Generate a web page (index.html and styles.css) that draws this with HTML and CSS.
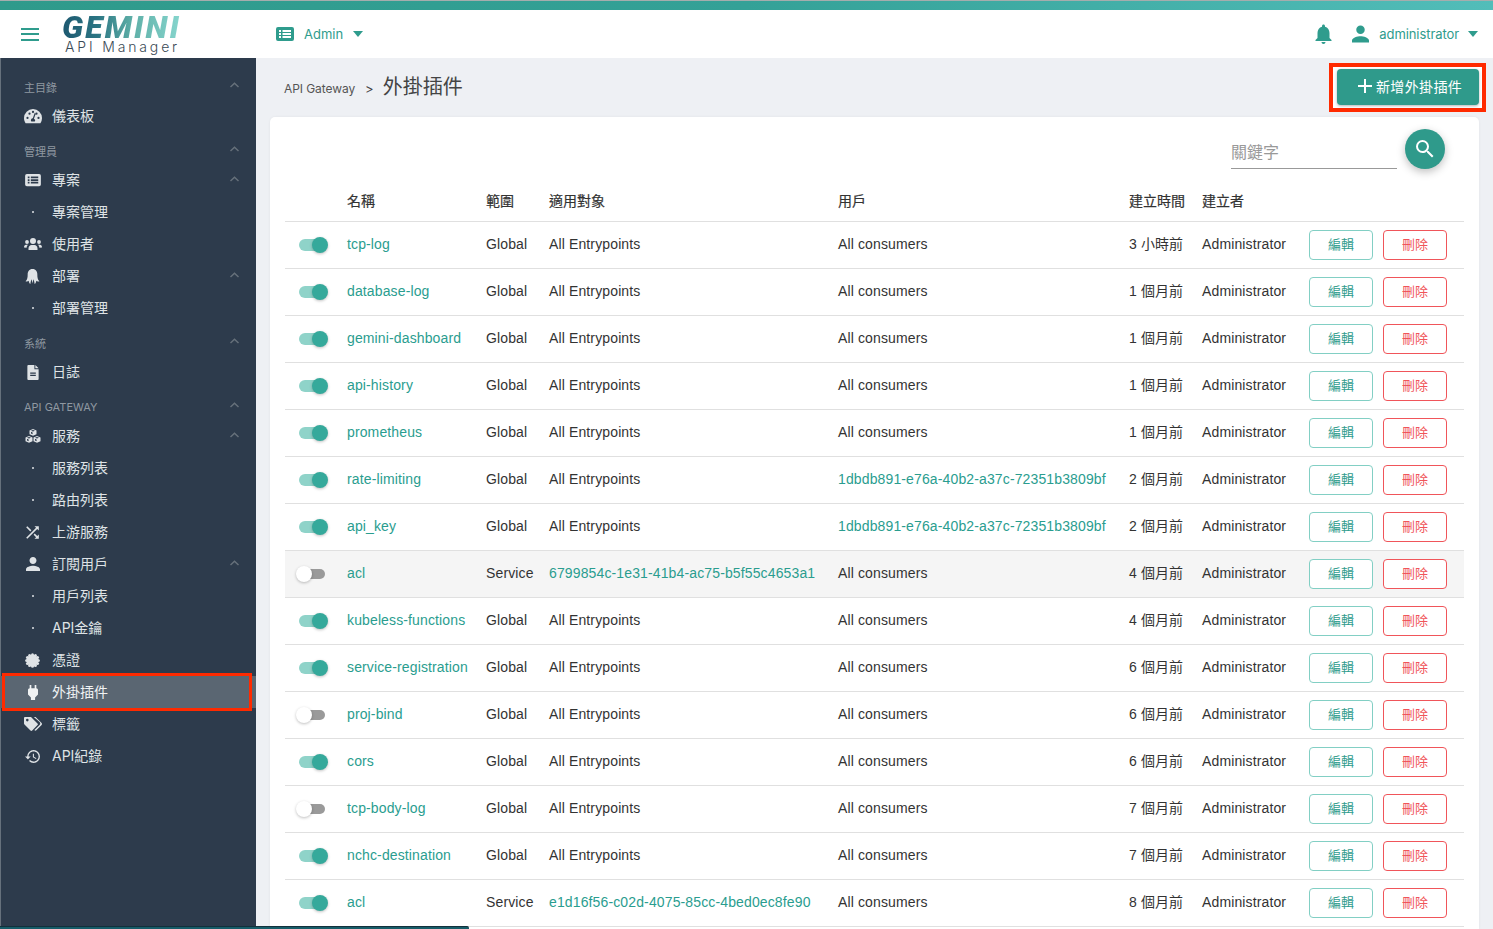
FILE: index.html
```html
<!DOCTYPE html>
<html lang="zh-Hant">
<head>
<meta charset="utf-8">
<title>外掛插件</title>
<link rel="stylesheet" href="styles.css">
</head>
<body>
<svg class="defs" width="0" height="0" aria-hidden="true">
  <symbol id="i-caret" viewBox="0 0 10 6"><path d="M0 0h10L5 6z"/></symbol>
  <symbol id="i-chev" viewBox="0 0 10 6"><path d="M5 0l5 4.600-1.100 1.200L5 2.300 1.100 5.800 0 4.600z"/></symbol>
  <symbol id="i-gauge" viewBox="0 0 18 16"><path fill-rule="evenodd" d="M9 1a9 9 0 0 0-9 9c0 1.900.6 3.700 1.600 5.200h14.800A9 9 0 0 0 18 10a9 9 0 0 0-9-9zM3.500 11a1.100 1.100 0 1 1 0-2.200 1.100 1.100 0 0 1 0 2.200zm2-4.200a1.100 1.100 0 1 1 0-2.200 1.100 1.100 0 0 1 0 2.200zM9 5a1.100 1.100 0 1 1 0-2.200A1.100 1.100 0 0 1 9 5zm1.800 8.500H7.300a2 2 0 0 1 1.500-3.200l2-5.500 1.100.4-2 5.500a2 2 0 0 1 .9 2.800zM14.500 11a1.100 1.100 0 1 1 0-2.200 1.100 1.100 0 0 1 0 2.200zm-2-4.200a1.100 1.100 0 1 1 0-2.200 1.100 1.100 0 0 1 0 2.200z"/></symbol>
  <symbol id="i-list" viewBox="0 0 18 16"><path fill-rule="evenodd" d="M2 1h14a2 2 0 0 1 2 2v10a2 2 0 0 1-2 2H2a2 2 0 0 1-2-2V3a2 2 0 0 1 2-2zm1 3v2h2V4zm3.500 0v2H15V4zM3 7v2h2V7zm3.500 0v2H15V7zM3 10v2h2v-2zm3.500 0v2H15v-2z"/></symbol>
  <symbol id="i-users" viewBox="0 0 18 14"><circle cx="9" cy="4" r="3"/><circle cx="3" cy="5" r="1.900"/><circle cx="15" cy="5" r="1.900"/><path d="M4.500 13v-1.500C4.500 9.300 6 8 7.500 8h3c1.500 0 3 1.300 3 3.500V13zM0 10.500C0 8.800.8 7.800 2 7.800h2c-.6.600-1.300 1.700-1.400 3zM18 10.500c0-1.700-.8-2.700-2-2.700h-2c.6.600 1.300 1.700 1.400 3z"/></symbol>
  <symbol id="i-ghost" viewBox="0 0 13 14"><path d="M6.500 0C9.700 0 11 2.500 11 5c0 3 .2 5 2 6.500-1.500.5-2.500 0-3-.5 0 1-.5 2.500-1.500 3-.2-1.500-.6-3.500-1.200-4.500L6.500 13.500 5.700 9.500c-.6 1-1 3-1.200 4.500-1-.5-1.500-2-1.500-3-.5.5-1.500 1-3 .5C1.800 10 2 8 2 5 2 2.500 3.300 0 6.500 0z"/></symbol>
  <symbol id="i-file" viewBox="0 0 12 16"><path fill-rule="evenodd" d="M1 0h6.500v4.500H12V15a1 1 0 0 1-1 1H1a1 1 0 0 1-1-1V1a1 1 0 0 1 1-1zm2 8v1.200h6V8zm0 2.500v1.200h6v-1.200zM8.500 0L12 3.500H8.500z"/></symbol>
  <symbol id="i-cubes" viewBox="0 0 16 14"><path d="M8 0l3.500 1.400v3.800L8 6.700 4.500 5.200V1.400zM4 7l3.500 1.400v3.800L4 13.800.5 12.200V8.400zM12 7l3.500 1.400v3.800L12 13.800l-3.500-1.600V8.400z"/><path fill="#2d3b4c" d="M6 1.800l2 .8 2-.8-2-.8zM6 2.800l1.600.7v1.700L6 4.500zM2 8.800l2 .8 2-.8-2-.8zM2 9.800l1.600.7v1.700L2 11.500zM10 8.800l2 .8 2-.8-2-.8zM10 9.800l1.600.7v1.700l-1.600-.7z"/></symbol>
  <symbol id="i-shuffle" viewBox="2.500 2.500 19 19"><path d="M10.590 9.170L5.410 4 4 5.410l5.170 5.170 1.420-1.410zM14.500 4l2.040 2.040L4 18.590 5.410 20 17.960 7.460 20 9.500V4h-5.500zm.33 9.410l-1.410 1.410 3.130 3.130L14.500 20H20v-5.500l-2.040 2.040-3.130-3.130z"/></symbol>
  <symbol id="i-person" viewBox="4 4 16 16"><path d="M12 12c2.210 0 4-1.790 4-4s-1.790-4-4-4-4 1.790-4 4 1.790 4 4 4zm0 2c-2.670 0-8 1.340-8 4v2h16v-2c0-2.660-5.330-4-8-4z"/></symbol>
  <symbol id="i-cert" viewBox="0 0 16 16"><circle cx="8" cy="8" r="6.200"/><circle cx="14.200" cy="8" r="1.600"/><circle cx="13.370" cy="11.100" r="1.600"/><circle cx="11.100" cy="13.370" r="1.600"/><circle cx="8" cy="14.200" r="1.600"/><circle cx="4.900" cy="13.370" r="1.600"/><circle cx="2.630" cy="11.100" r="1.600"/><circle cx="1.800" cy="8" r="1.600"/><circle cx="2.630" cy="4.900" r="1.600"/><circle cx="4.900" cy="2.630" r="1.600"/><circle cx="8" cy="1.800" r="1.600"/><circle cx="11.100" cy="2.630" r="1.600"/><circle cx="13.370" cy="4.900" r="1.600"/></symbol>
  <symbol id="i-plug" viewBox="5 3 14 18"><path d="M16.010 7L16 3h-2v4h-4V3H8v4h-.01C7 6.990 6 7.990 6 8.990v5.490L9.500 18v3h5v-3l3.500-3.510v-5.500c0-1-1-2-1.990-1.990z"/></symbol>
  <symbol id="i-tags" viewBox="0 0 18 14"><path fill-rule="evenodd" d="M0 1.200C0 .5.500 0 1.200 0h5.300c.4 0 .7.100 1 .4l6 6c.5.500.5 1.200 0 1.700l-5.300 5.400c-.5.500-1.200.5-1.700 0l-6-6C.2 7.200 0 6.900 0 6.500zm3.300 3.200a1.300 1.300 0 1 0 0-2.600 1.300 1.300 0 0 0 0 2.600z"/><path d="M9.800 0h1.300c.4 0 .7.100 1 .4l5.500 5.700c.5.500.5 1.300 0 1.800l-5.300 5.400c-.5.500-1.200.5-1.700 0l-.2-.2 5.200-5.200c.9-.9.900-1.900 0-2.800z"/></symbol>
  <symbol id="i-history" viewBox="1 3 21 18"><path d="M13 3a9 9 0 0 0-9 9H1l3.890 3.890.07.14L9 12H6c0-3.870 3.130-7 7-7s7 3.130 7 7-3.130 7-7 7c-1.930 0-3.680-.79-4.940-2.060l-1.420 1.420A8.954 8.954 0 0 0 13 21a9 9 0 0 0 0-18zm-1 5v5l4.280 2.540.72-1.210-3.500-2.080V8H12z"/></symbol>
</svg>

<div class="topband"></div>
<header class="topbar">
  <div class="hamburger"><span></span><span></span><span></span></div>
  <div class="logo">
    <div class="logo-main">GEMINI</div>
    <div class="logo-sub">API Manager</div>
  </div>
  <div class="project">
    <svg class="project-icon"><use href="#i-list"/></svg>
    <span>Admin</span>
    <svg class="caret"><use href="#i-caret"/></svg>
  </div>
  <div class="top-right">
    <svg class="bell" viewBox="4 2 16 20"><path d="M12 22c1.100 0 2-.9 2-2h-4c0 1.100.9 2 2 2zm6-6v-5c0-3.070-1.630-5.640-4.500-6.320V4c0-.83-.67-1.500-1.500-1.500s-1.500.67-1.500 1.500v.68C7.640 5.360 6 7.920 6 11v5l-2 2v1h16v-1l-2-2z"/></svg>
    <svg class="user"><use href="#i-person"/></svg>
    <span class="username">administrator</span>
    <svg class="caret"><use href="#i-caret"/></svg>
  </div>
</header>

<div class="main">
  <nav class="sidebar">
    <div class="nav-label"><span>主目錄</span><svg class="chev"><use href="#i-chev"/></svg></div>
    <div class="nav-item"><svg class="nav-icon ic-18"><use href="#i-gauge"/></svg><span>儀表板</span></div>

    <div class="nav-label spaced"><span>管理員</span><svg class="chev"><use href="#i-chev"/></svg></div>
    <div class="nav-item"><svg class="nav-icon ic-16"><use href="#i-list"/></svg><span>專案</span><svg class="chev"><use href="#i-chev"/></svg></div>
    <div class="nav-item"><i class="dot"></i><span>專案管理</span></div>
    <div class="nav-item"><svg class="nav-icon ic-18"><use href="#i-users"/></svg><span>使用者</span></div>
    <div class="nav-item"><svg class="nav-icon ic-15"><use href="#i-ghost"/></svg><span>部署</span><svg class="chev"><use href="#i-chev"/></svg></div>
    <div class="nav-item"><i class="dot"></i><span>部署管理</span></div>

    <div class="nav-label spaced"><span>系統</span><svg class="chev"><use href="#i-chev"/></svg></div>
    <div class="nav-item"><svg class="nav-icon ic-12"><use href="#i-file"/></svg><span>日誌</span></div>

    <div class="nav-label spaced"><span>API GATEWAY</span><svg class="chev"><use href="#i-chev"/></svg></div>
    <div class="nav-item"><svg class="nav-icon ic-16"><use href="#i-cubes"/></svg><span>服務</span><svg class="chev"><use href="#i-chev"/></svg></div>
    <div class="nav-item"><i class="dot"></i><span>服務列表</span></div>
    <div class="nav-item"><i class="dot"></i><span>路由列表</span></div>
    <div class="nav-item"><svg class="nav-icon ic-15"><use href="#i-shuffle"/></svg><span>上游服務</span></div>
    <div class="nav-item"><svg class="nav-icon ic-14"><use href="#i-person"/></svg><span>訂閱用戶</span><svg class="chev"><use href="#i-chev"/></svg></div>
    <div class="nav-item"><i class="dot"></i><span>用戶列表</span></div>
    <div class="nav-item"><i class="dot"></i><span>API金鑰</span></div>
    <div class="nav-item"><svg class="nav-icon ic-15"><use href="#i-cert"/></svg><span>憑證</span></div>
    <div class="nav-item active"><svg class="nav-icon ic-12"><use href="#i-plug"/></svg><span>外掛插件</span><b class="mark"></b></div>
    <div class="nav-item"><svg class="nav-icon ic-18"><use href="#i-tags"/></svg><span>標籤</span></div>
    <div class="nav-item"><svg class="nav-icon ic-15"><use href="#i-history"/></svg><span>API紀錄</span></div>
  </nav>

  <section class="content">
    <div class="page-head">
      <div class="crumbs"><span class="crumb">API Gateway</span><span class="sep">&gt;</span><h1>外掛插件</h1></div>
      <div class="add-frame"><button class="add-btn"><svg viewBox="5 5 14 14"><path d="M19 13h-6v6h-2v-6H5v-2h6V5h2v6h6v2z"/></svg><span>新增外掛插件</span></button></div>
    </div>
    <div class="card">
      <div class="search-row">
        <input class="search-input" placeholder="關鍵字">
        <button class="search-btn"><svg viewBox="3 3 18 18"><path d="M15.500 14h-.79l-.28-.27A6.471 6.471 0 0 0 16 9.500 6.500 6.500 0 1 0 9.500 16c1.610 0 3.090-.59 4.230-1.570l.27.28v.79l5 4.990L20.490 19l-4.990-5zm-6 0C7.010 14 5 11.990 5 9.500S7.010 5 9.500 5 14 7.010 14 9.500 11.990 14 9.500 14z"/></svg></button>
      </div>
      <table class="plugins">
        <colgroup><col class="c1"><col class="c2"><col class="c3"><col class="c4"><col class="c5"><col class="c6"><col class="c7"><col class="c8"></colgroup>
        <thead><tr><th></th><th>名稱</th><th>範圍</th><th>適用對象</th><th>用戶</th><th>建立時間</th><th>建立者</th><th></th></tr></thead>
        <tbody>
          <tr><td><div class="toggle on"><i></i></div></td><td><a>tcp-log</a></td><td>Global</td><td>All Entrypoints</td><td>All consumers</td><td>3 小時前</td><td>Administrator</td><td><div class="actions"><button class="btn edit">編輯</button><button class="btn del">刪除</button></div></td></tr>
          <tr><td><div class="toggle on"><i></i></div></td><td><a>database-log</a></td><td>Global</td><td>All Entrypoints</td><td>All consumers</td><td>1 個月前</td><td>Administrator</td><td><div class="actions"><button class="btn edit">編輯</button><button class="btn del">刪除</button></div></td></tr>
          <tr><td><div class="toggle on"><i></i></div></td><td><a>gemini-dashboard</a></td><td>Global</td><td>All Entrypoints</td><td>All consumers</td><td>1 個月前</td><td>Administrator</td><td><div class="actions"><button class="btn edit">編輯</button><button class="btn del">刪除</button></div></td></tr>
          <tr><td><div class="toggle on"><i></i></div></td><td><a>api-history</a></td><td>Global</td><td>All Entrypoints</td><td>All consumers</td><td>1 個月前</td><td>Administrator</td><td><div class="actions"><button class="btn edit">編輯</button><button class="btn del">刪除</button></div></td></tr>
          <tr><td><div class="toggle on"><i></i></div></td><td><a>prometheus</a></td><td>Global</td><td>All Entrypoints</td><td>All consumers</td><td>1 個月前</td><td>Administrator</td><td><div class="actions"><button class="btn edit">編輯</button><button class="btn del">刪除</button></div></td></tr>
          <tr><td><div class="toggle on"><i></i></div></td><td><a>rate-limiting</a></td><td>Global</td><td>All Entrypoints</td><td><a>1dbdb891-e76a-40b2-a37c-72351b3809bf</a></td><td>2 個月前</td><td>Administrator</td><td><div class="actions"><button class="btn edit">編輯</button><button class="btn del">刪除</button></div></td></tr>
          <tr><td><div class="toggle on"><i></i></div></td><td><a>api_key</a></td><td>Global</td><td>All Entrypoints</td><td><a>1dbdb891-e76a-40b2-a37c-72351b3809bf</a></td><td>2 個月前</td><td>Administrator</td><td><div class="actions"><button class="btn edit">編輯</button><button class="btn del">刪除</button></div></td></tr>
          <tr class="hover"><td><div class="toggle off"><i></i></div></td><td><a>acl</a></td><td>Service</td><td><a>6799854c-1e31-41b4-ac75-b5f55c4653a1</a></td><td>All consumers</td><td>4 個月前</td><td>Administrator</td><td><div class="actions"><button class="btn edit">編輯</button><button class="btn del">刪除</button></div></td></tr>
          <tr><td><div class="toggle on"><i></i></div></td><td><a>kubeless-functions</a></td><td>Global</td><td>All Entrypoints</td><td>All consumers</td><td>4 個月前</td><td>Administrator</td><td><div class="actions"><button class="btn edit">編輯</button><button class="btn del">刪除</button></div></td></tr>
          <tr><td><div class="toggle on"><i></i></div></td><td><a>service-registration</a></td><td>Global</td><td>All Entrypoints</td><td>All consumers</td><td>6 個月前</td><td>Administrator</td><td><div class="actions"><button class="btn edit">編輯</button><button class="btn del">刪除</button></div></td></tr>
          <tr><td><div class="toggle off"><i></i></div></td><td><a>proj-bind</a></td><td>Global</td><td>All Entrypoints</td><td>All consumers</td><td>6 個月前</td><td>Administrator</td><td><div class="actions"><button class="btn edit">編輯</button><button class="btn del">刪除</button></div></td></tr>
          <tr><td><div class="toggle on"><i></i></div></td><td><a>cors</a></td><td>Global</td><td>All Entrypoints</td><td>All consumers</td><td>6 個月前</td><td>Administrator</td><td><div class="actions"><button class="btn edit">編輯</button><button class="btn del">刪除</button></div></td></tr>
          <tr><td><div class="toggle off"><i></i></div></td><td><a>tcp-body-log</a></td><td>Global</td><td>All Entrypoints</td><td>All consumers</td><td>7 個月前</td><td>Administrator</td><td><div class="actions"><button class="btn edit">編輯</button><button class="btn del">刪除</button></div></td></tr>
          <tr><td><div class="toggle on"><i></i></div></td><td><a>nchc-destination</a></td><td>Global</td><td>All Entrypoints</td><td>All consumers</td><td>7 個月前</td><td>Administrator</td><td><div class="actions"><button class="btn edit">編輯</button><button class="btn del">刪除</button></div></td></tr>
          <tr><td><div class="toggle on"><i></i></div></td><td><a>acl</a></td><td>Service</td><td><a>e1d16f56-c02d-4075-85cc-4bed0ec8fe90</a></td><td>All consumers</td><td>8 個月前</td><td>Administrator</td><td><div class="actions"><button class="btn edit">編輯</button><button class="btn del">刪除</button></div></td></tr>
        </tbody>
      </table>
    </div>
  </section>
</div>
<div class="progress"></div>
</body>
</html>
```

FILE: styles.css
```css
* { box-sizing: border-box; }
html, body { margin: 0; height: 100%; overflow: hidden; }
body {
  display: flex;
  flex-direction: column;
  font-family: "Liberation Sans", "Noto Sans CJK TC", sans-serif;
  font-size: 14px;
  color: #333;
  background: #eef0f4;
}
.defs { position: absolute; }
svg { display: block; fill: currentColor; }

.topband {
  height: 10px;
  flex: none;
  border-top: 1px solid #a5adad;
  background: linear-gradient(90deg, #2f9a8b, #34a197 50%, #52bdb9);
}
.topbar {
  height: 48px;
  flex: none;
  display: flex;
  align-items: center;
  background: #fff;
  color: #2f9c8d;
  font-family: Inter, "Noto Sans CJK TC", sans-serif;
}
.hamburger { width: 18px; margin-left: 21px; display: flex; flex-direction: column; gap: 3.5px; }
.hamburger span { height: 2px; background: #2f9c8d; }
.logo { margin-left: 23px; width: 151px; height: 48px; padding-top: 4px; }
.logo-main {
  font: italic 900 32px/27px Roboto, sans-serif;
  letter-spacing: 2.1px;
  background: linear-gradient(90deg, #1d5870 0, #2b7583 30%, #5fb0a8 60%, #86d5cd 100%);
  -webkit-background-clip: text;
  background-clip: text;
  color: transparent;
  width: 118px;
}
.logo-sub {
  font: 300 14px/13px Inter, sans-serif;
  letter-spacing: 2.85px;
  color: #3a4a55;
  margin: -1px 0 0 3px;
  white-space: nowrap;
}
.project { margin-left: 63px; display: flex; align-items: center; font-size: 13px; }
.project-icon { width: 18px; height: 16px; margin-top: -1px; }
.project span { margin-left: 10px; }
.caret { width: 10px; height: 6px; }
.project .caret { margin-left: 10px; }
.top-right { margin-left: auto; display: flex; align-items: center; padding-right: 15px; font-size: 13px; }
.bell { width: 17px; height: 20px; }
.user { width: 17px; height: 18px; margin-left: 20px; }
.username { margin-left: 10px; letter-spacing: -.08px; }
.top-right .caret { margin-left: 9px; }

.main { flex: 1; min-height: 0; display: flex; }
.sidebar {
  width: 256px;
  flex: none;
  padding-top: 16px;
  background: #2d3b4c;
  border-left: 1px solid #66717c;
  color: #dfe3e6;
  font-family: Inter, "Noto Sans CJK TC", sans-serif;
}
.nav-label {
  height: 26px;
  display: flex;
  align-items: center;
  padding: 0 17px 0 23px;
  font-size: 11px;
  color: #8f98a1;
}
.nav-label.spaced { margin-top: 6px; }
.chev { width: 9px; height: 6px; margin-left: auto; color: #66707a; margin-top: -5px; }
.nav-item {
  position: relative;
  height: 32px;
  display: flex;
  align-items: center;
  padding-right: 17px;
  font-size: 14px;
}
.nav-item .chev { margin-top: -2px; }
.nav-icon { width: 18px; height: 16px; margin: 0 0 0 23px; }
.nav-item > span { position: absolute; left: 51px; top: 5px; }
.ic-18 { width: 18px; height: 16px; }
.ic-16 { width: 18px; height: 14px; }
.ic-15 { width: 15px; height: 15px; margin-left: 24px; }
.ic-14 { width: 14px; height: 14px; margin-left: 25px; }
.ic-12 { width: 12px; height: 15px; margin-left: 26px; }
.dot { width: 2px; height: 2px; margin-left: 31px; background: #dfe3e6; border-radius: 50%; }
.nav-item.active { background: #5a6672; color: #f0f2f3; margin-left: -1px; padding-left: 1px; }
.nav-item.active > span { left: 52px; }
.mark {
  position: absolute;
  left: 2px;
  top: -3px;
  width: 250px;
  height: 38px;
  border: 3.5px solid #ff2a00;
}

.content { flex: 1; min-width: 0; display: flex; flex-direction: column; padding: 0 14px; }
.page-head { height: 59px; flex: none; display: flex; justify-content: space-between; align-items: flex-start; }
.crumbs { display: flex; align-items: center; height: 57px; padding-left: 14px; }
.crumb { font: 12px Inter, sans-serif; color: #555; letter-spacing: -.08px; margin-top: 4px; }
.sep { margin-left: 10px; font: 13px Inter, sans-serif; color: #444; margin-top: 4px; }
.crumbs h1 { margin: -2px 0 0 9px; font: 400 20px "Noto Sans CJK TC", sans-serif; color: #444; }
.add-frame {
  margin: 5px -7px 0 0;
  padding: 2px 3px 3px 4px;
  border: 4px solid #ff2a00;
  background: #fff;
  height: 49px;
}
.add-btn {
  width: 142px;
  height: 36px;
  display: flex;
  align-items: center;
  padding: 0 0 2px 21px;
  border: 0;
  border-radius: 4px;
  background: #2f9a8b;
  color: #fff;
  box-shadow: 0 1px 3px rgba(0,0,0,.3);
  font: 14px "Noto Sans CJK TC", sans-serif;
  letter-spacing: .35px;
}
.add-btn svg { width: 14px; height: 14px; margin-right: 4px; }

.card {
  flex: 1;
  background: #fff;
  border-radius: 5px 5px 0 0;
  padding: 12px 15px 0;
  box-shadow: 0 0 3px rgba(0,0,0,.06);
}
.search-row { height: 55px; display: flex; justify-content: flex-end; align-items: flex-start; gap: 8px; padding-right: 19px; }
.search-input {
  width: 166px;
  height: 40px;
  padding: 6px 0 1px 0;
  border: 0;
  border-bottom: 1px solid #999;
  outline: 0;
  font: 16px "Noto Sans CJK TC", sans-serif;
  background: transparent;
}
.search-input::placeholder { color: #999; opacity: 1; }
.search-btn {
  width: 40px;
  height: 40px;
  padding: 10px 11px;
  border: 0;
  border-radius: 50%;
  background: #2f9a8b;
  color: #fff;
  box-shadow: 0 3px 8px rgba(0,0,0,.25);
}
.search-btn svg { width: 18px; height: 18px; }

.plugins { width: 1179px; table-layout: fixed; border-collapse: separate; border-spacing: 0; letter-spacing: .13px; }
.c1 { width: 62px; } .c2 { width: 139px; } .c3 { width: 63px; } .c4 { width: 289px; }
.c5 { width: 291px; } .c6 { width: 73px; } .c7 { width: 107px; } .c8 { width: 155px; }
.plugins th {
  height: 38px;
  padding: 0 0 6px;
  text-align: left;
  font-weight: 400;
  color: #333;
  letter-spacing: 0;
  border-bottom: 1px solid #e0e0e0;
  -webkit-text-stroke: .2px #333;
}
.plugins td { height: 47px; padding: 0 0 2px; border-bottom: 1px solid #e0e0e0; white-space: nowrap; overflow: visible; }
.plugins td:first-child, .plugins td:last-child { padding-bottom: 0; }
.plugins td:nth-child(6) { padding-bottom: 4px; letter-spacing: 0; word-spacing: .4px; }
.plugins a { color: #2a9d8f; }
.hover td { background: #f5f5f5; }
.toggle { position: relative; width: 34px; height: 16px; margin-left: 10px; }
.toggle::before { content: ""; position: absolute; top: 2px; height: 12px; border-radius: 6px; }
.toggle i { position: absolute; top: 0; width: 16px; height: 16px; border-radius: 50%; box-shadow: 0 1px 3px rgba(0,0,0,.25); }
.toggle.on::before { left: 4px; width: 24px; background: #8fd3c9; }
.toggle.on i { left: 17px; background: #35a99b; }
.toggle.off::before { left: 8px; width: 22px; height: 10px; top: 3px; background: #9a9a9a; }
.toggle.off i { left: 1px; background: #fff; }
.actions { display: flex; gap: 10px; padding-left: 0; }
.btn {
  width: 64px;
  height: 30px;
  padding: 0 0 3px;
  background: #fff;
  border-radius: 4px;
  font: 13px "Noto Sans CJK TC", sans-serif;
}
.btn.edit { border: 1px solid #82cfc4; color: #2f9c8d; }
.btn.del { border: 1px solid #f0555a; color: #f0555a; }
.progress { position: fixed; left: 0; bottom: 0; width: 469px; height: 3px; background: #175c68; border-top: 1px solid #12303c; border-radius: 0 2px 0 0; }
```
